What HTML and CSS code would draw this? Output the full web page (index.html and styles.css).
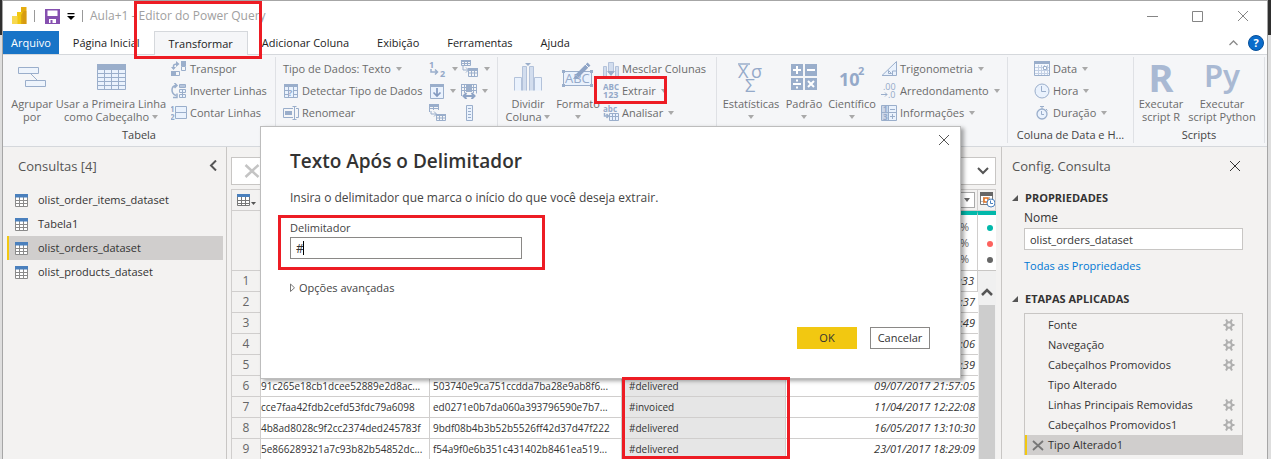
FILE: index.html
```html
<!DOCTYPE html>
<html lang="pt-BR">
<head>
<meta charset="utf-8">
<title>Aula+1 - Editor do Power Query</title>
<link rel="stylesheet" href="styles.css">
</head>
<body>
<svg class="defs" aria-hidden="true">
  <symbol id="table" viewBox="0 0 14 13"><path fill="#fff" d="M.5 2.500h12v9.500h-12z"/><path fill="none" stroke="#8a8a8a" d="M.5 3v9.500h12V3M4.500 3v9M8.500 3v9M1 6.500h12M1 9.500h12"/><path fill="#4a80bd" d="M0 0h13v3.500H0z"/></symbol>
  <symbol id="gear" viewBox="0 0 12 12"><path stroke="#b0b0b0" stroke-width="2" d="M.5 6h11M3 .5l6 11M9 .5l-6 11"/><circle cx="6" cy="6" r="2.800" fill="#f3f2f1" stroke="#b0b0b0" stroke-width="2"/></symbol>
  <symbol id="cross" viewBox="0 0 12 12"><path fill="none" stroke="currentColor" d="M1 1l10 10M11 1L1 11"/></symbol>
</svg>
<div class="window">
  <header class="titlebar">
    <svg class="logo" width="16" height="18" viewBox="0 0 16 18"><path fill="#e6ad10" d="M9 0h5.500v17H9z"/><path fill="#f2c811" d="M5 5h5.500v12H5z"/><path fill="#f7d84f" d="M0 9h5.500v8H0z"/><path fill="#c88a10" d="M12 4h2.500v13H9v-9z" opacity=".5"/></svg>
    <i class="bar"></i>
    <button class="plain" aria-label="Salvar"><svg width="15" height="15" viewBox="0 0 15 15"><path fill="#8650b0" d="M0 0h15v15H0z"/><path fill="#fff" d="M2.500 1.500h10V7h-10zM4 10h7v4H4z"/><path fill="#8650b0" d="M5.500 11h2v3h-2z"/></svg></button>
    <button class="plain more" aria-label="Personalizar"><svg width="8" height="8" viewBox="0 0 8 8"><path d="M.5 0h7v1.200h-7zM0 3h8L4 7z"/></svg></button>
    <i class="bar"></i>
    <h1>Aula+1 - Editor do Power Query</h1>
    <div class="controls">
      <button class="plain" aria-label="Minimizar"><svg width="11" height="11"><path stroke="#858585" d="M0 5.500h11"/></svg></button>
      <button class="plain" aria-label="Maximizar"><svg width="11" height="11"><path fill="none" stroke="#858585" d="M.5.500h10v10H.5z"/></svg></button>
      <button class="plain" aria-label="Fechar"><svg width="12" height="12"><use href="#cross"/></svg></button>
    </div>
  </header>

  <nav class="tabs">
    <button class="file">Arquivo</button>
    <button>Página Inicial</button>
    <button class="active">Transformar</button>
    <button>Adicionar Coluna</button>
    <button>Exibição</button>
    <button>Ferramentas</button>
    <button>Ajuda</button>
    <div class="help">
      <svg width="9" height="6"><path fill="none" stroke="#8a8a8a" stroke-width="1.300" d="M.5 5l4-4 4 4"/></svg>
      <button class="plain question" aria-label="Ajuda do programa">?</button>
    </div>
  </nav>

  <section class="ribbon">
    <div class="group g-table">
      <div class="tools">
        <button class="big"><svg width="32" height="32" viewBox="0 0 32 32"><path fill="#eef4fc" stroke="#9aaecb" d="M2.500 6.500h20v6h-20zM9.500 19.500h20v6h-20z"/><path stroke="#9aaecb" d="M15 13l6 6"/></svg><span>Agrupar<br>por</span></button>
        <button class="big"><svg width="32" height="32" viewBox="0 0 32 32"><path fill="#eaf2fd" stroke="#9aaecb" d="M2.500 3.500h28v25h-28z"/><path stroke="#9aaecb" d="M2 12.500h28M2 16.500h28M2 20.500h28M2 24.500h28M9.500 8v20M16.500 8v20M23.500 8v20"/><path fill="#9aaecb" d="M2 3h29v6H2z"/></svg><span>Usar a Primeira Linha<br>como Cabeçalho <i class="caret"></i></span></button>
        <div class="stack">
          <button><svg width="16" height="16" viewBox="0 0 16 16"><path fill="none" stroke="#9aaecb" d="M10.500 5.500h4v4h-4zM10.500.500h4v4h-4zM.5 10.500h8v4h-8z"/><path fill="none" stroke="#9aaecb" stroke-width="1.500" d="M2.500 8V5q0-2 4-2"/><path fill="#9aaecb" d="M10 0h5v5h-5zM0 10h5v5H0zM5 0l3.500 3L5 6zM0 6h5L2.500 9z"/></svg>Transpor</button>
          <button><svg width="16" height="16" viewBox="0 0 16 16"><path fill="none" stroke="#9aaecb" stroke-width="1.500" d="M5 2.500Q1 3 1 7t4 5.500M3.500 0L6 2.500 3.500 5M2 14.500h4v-4"/><path fill="#eaf2fd" stroke="#9aaecb" d="M8.500 1.500h6v3h-6zM8.500 6.500h6v3h-6zM8.500 11.500h6v3h-6zM11.500 6v9"/><path fill="#b6c5dc" d="M9 2h5v2H9z"/></svg>Inverter Linhas</button>
          <button><svg width="16" height="16" viewBox="0 0 16 16"><text x="-1" y="7" class="tiny">1</text><text x="-1" y="15" class="tiny">2</text><path fill="#eaf2fd" stroke="#9aaecb" d="M4.500 1.500h11v6h-11zM4.500 7.500h11v6h-11z"/></svg>Contar Linhas</button>
        </div>
      </div>
      <h2>Tabela</h2>
    </div>

    <div class="group g-any">
      <div class="tools">
        <div class="stack">
          <button>Tipo de Dados: Texto <i class="caret"></i></button>
          <button><svg width="16" height="16" viewBox="0 0 16 16"><path fill="#eaf2fd" stroke="#9aaecb" d="M1.500 1.500h13v13h-13zM5.500 4v10M10.500 4v10M1 7.500h13M1 11.500h13"/><path fill="#9aaecb" d="M1 1h14v3H1z"/><path fill="#eaf2fd" d="M6 5h4v9H6z"/><text x="5" y="13" class="small">?</text></svg>Detectar Tipo de Dados</button>
          <button><svg width="16" height="16" viewBox="0 0 16 16"><path fill="none" stroke="#9aaecb" d="M10 3.500H.5v9H10M13 3.500h2.500v9H13M11.500 1.500v13M9.500 1.500h4M9.500 14.500h4"/><path fill="#9aaecb" d="M2 6h7v4H2z"/></svg>Renomear</button>
        </div>
        <div class="stack">
          <button aria-label="Substituir Valores"><svg width="18" height="18" viewBox="0 0 18 18"><text x="0" y="8" class="small">1</text><text x="11" y="17" class="small">2</text><path fill="none" stroke="#9aaecb" stroke-width="1.500" d="M2 9v3h6M6 9.500L8.500 12 6 14.500"/></svg><i class="caret"></i></button>
          <button aria-label="Preenchimento"><svg width="16" height="16" viewBox="0 0 16 16"><path fill="#eaf2fd" stroke="#9aaecb" d="M1.500 1.500h13v14h-13z"/><path fill="#9aaecb" d="M1 1h14v3H1z"/><path fill="none" stroke="#8299bf" stroke-width="1.700" d="M8 5v8M4.500 9.500L8 13l3.500-3.500"/></svg><i class="caret"></i></button>
          <button aria-label="Coluna Dinâmica"><svg width="18" height="18" viewBox="0 0 18 18"><path fill="none" stroke="#9aaecb" d="M1 4.500h8M4.500 1v5M.5 8V1.500h9V6M7.500 11.500h9v5h-9zM7 14h10M10.500 11v6M13.500 11v6M2 7v3h5M5 7.500L7.500 10 5 12.500"/><path fill="#9aaecb" d="M0 0h10v3H0zM7 10h10v2H7z"/></svg></button>
        </div>
        <div class="stack">
          <button aria-label="Transformar em Linhas"><svg width="18" height="18" viewBox="0 0 18 18"><path fill="none" stroke="#9aaecb" d="M.5.500h9v5h-9zM0 3.500h10M3.500 0v6M6.500 0v6M7.500 9.500h9v7h-9zM7 13h10M10.500 9v8M13.500 9v8M2 6v4h5M5 7.500L7.500 10 5 12.500"/><path fill="#9aaecb" d="M0 0h10v2H0zM7 8h10v3H7z"/></svg><i class="caret"></i></button>
          <button aria-label="Mover"><svg width="16" height="16" viewBox="0 0 16 16"><path fill="none" stroke="#9aaecb" d="M.5 1.500h15v9M.5 1v12M3.500 1v9M0 4.500h5M0 7.500h5M12.500 1v9M11 4.500h5M11 7.500h5"/><path fill="#9aaecb" d="M5 1h6v8H5z"/><path fill="none" stroke="#8da3c5" stroke-width="2" d="M3 13h10M5.500 10L2.500 13l3 3M10.500 10l3 3-3 3"/></svg><i class="caret"></i></button>
          <button aria-label="Converter em Lista"><svg width="16" height="16" viewBox="0 0 16 16"><path fill="#eaf2fd" stroke="#9aaecb" d="M5.500.500h6v15h-6zM7 3.500h3M7 6.500h3M7 9.500h3M7 12.500h3"/></svg></button>
        </div>
      </div>
    </div>

    <div class="group g-text">
      <div class="tools">
        <button class="big"><svg width="32" height="32" viewBox="0 0 32 32"><path fill="#eaf2fd" stroke="#b3c2da" d="M2.500 29.500v-13h7v13M22.500 29.500v-13h7v13"/><path fill="#d2ddee" stroke="#b3c2da" d="M10.500 29.500v-24h4v24M17.500 29.500v-24h4v24"/><path fill="#9aaecb" d="M13 2h6l-3 3z"/></svg><span>Dividir<br>Coluna <i class="caret"></i></span></button>
        <button class="big"><svg width="34" height="32" viewBox="0 0 34 32"><path fill="#eaf2fd" stroke="#9aaecb" d="M2.500 10.500h28v14h-28z"/><path fill="#9aaecb" d="M1 9h3v3H1zM29 9h3v3h-3zM1 23h3v3H1zM29 23h3v3h-3z"/><text x="4" y="22" class="abc">ABC</text><path stroke="#8ea4c6" stroke-width="4" d="M16 15L28 3"/><path stroke="#f5f6f9" stroke-width="1" d="M24 3l4 4"/><path fill="#8ea4c6" d="M12 18l3-4 3 3z"/></svg><span>Formato<br><i class="caret"></i></span></button>
        <div class="stack">
          <button><svg width="16" height="16" viewBox="0 0 16 16"><path fill="#d2ddee" stroke="#b3c2da" d="M.5 15V5.500h3V15M12.500 15V5.500h3V15M5.500 12V1.500h5V12"/><path fill="#9aaecb" d="M4 10h8l-4 5z"/></svg>Mesclar Colunas</button>
          <button><svg width="16" height="16" viewBox="0 0 16 16"><text x="0" y="7" class="tiny">ABC</text><text x="0" y="15" class="small">123</text></svg>Extrair <i class="caret"></i></button>
          <button><svg width="16" height="16" viewBox="0 0 16 16"><text x="0" y="7" class="tiny">abc</text><path fill="#eaf2fd" stroke="#9aaecb" d="M6.500 8.500h9v7h-9zM6 11.500h10M9.500 8v7M12.500 8v7"/><path fill="none" stroke="#9aaecb" stroke-width="1.500" d="M1.500 8v3h4M3.500 9l2 2-2 2"/></svg>Analisar <i class="caret"></i></button>
        </div>
      </div>
    </div>

    <div class="group g-number">
      <div class="tools">
        <button class="big"><svg width="32" height="32" viewBox="0 0 32 32"><path stroke="#9aaecb" stroke-width="1.500" d="M3 3h12"/><text x="3" y="17" class="math">X</text><text x="16" y="17" class="math">σ</text><text x="10" y="31" class="math">Σ</text></svg><span>Estatísticas<br><i class="caret"></i></span></button>
        <button class="big"><svg width="32" height="32" viewBox="0 0 32 32"><path fill="#9aaecb" d="M3 3h12v12H3zM17 3h12v12H17zM3 17h12v12H3zM17 17h12v12H17z"/><path stroke="#fff" stroke-width="2" d="M5 9h8M9 5v8M19 9h8M5 23h8M20 20l6 6M26 20l-6 6"/><path fill="#fff" d="M8 18.500h2v2H8zM8 25.500h2v2H8z"/></svg><span>Padrão<br><i class="caret"></i></span></button>
        <button class="big"><svg width="32" height="32" viewBox="0 0 32 32"><text x="3" y="25" class="ten">10</text><text x="22" y="14" class="exp">2</text></svg><span>Científico<br><i class="caret"></i></span></button>
        <div class="stack">
          <button><svg width="16" height="16" viewBox="0 0 16 16"><path fill="#eaf2fd" stroke="#9aaecb" d="M15.500.500v14H1zM11.500 14v-4h4"/><path fill="#f5f6f9" stroke="#9aaecb" d="M7.500 12.500v-3l3 3z"/></svg>Trigonometria <i class="caret"></i></button>
          <button><svg width="16" height="16" viewBox="0 0 16 16"><text x="2" y="7" class="small plainnum">.00</text><text x="7" y="15" class="small plainnum">.0</text><path fill="none" stroke="#9aaecb" d="M0 11.500h6M4 9.500l2 2-2 2"/></svg>Arredondamento <i class="caret"></i></button>
          <button><svg width="16" height="16" viewBox="0 0 16 16"><path fill="#eaf2fd" stroke="#9aaecb" d="M.5.500h15v15H.5z"/><path fill="#cbd7e9" d="M1 1h6v14H1z"/><path stroke="#9aaecb" d="M7.500 0v16M0 7.500h16M9 4.500h5M9 11.500h5M11.500 9v5"/><text x="2" y="7" class="tiny">1</text><text x="2" y="15" class="tiny">3</text></svg>Informações <i class="caret"></i></button>
        </div>
      </div>
    </div>

    <div class="group g-date">
      <div class="tools">
        <div class="stack">
          <button><svg width="16" height="16" viewBox="0 0 16 16"><path fill="#f4f8fe" stroke="#9aaecb" d="M.5.500h15v14H.5z"/><path stroke="#c3d0e4" d="M4.500 4v10M7.500 4v10M10.500 4v10M13.500 4v10M1 6.500h14M1 9.500h14M1 12.500h14"/><path fill="#9aaecb" d="M0 0h16v3H0z"/><path fill="#fff" stroke="#9aaecb" d="M9.500 5.500h3v3h-3z"/></svg>Data <i class="caret"></i></button>
          <button><svg width="16" height="16" viewBox="0 0 16 16"><circle cx="8" cy="8" r="7" fill="#eaf2fd" stroke="#9aaecb"/><path fill="none" stroke="#9aaecb" d="M7.500 3v5.500H12"/></svg>Hora <i class="caret"></i></button>
          <button><svg width="16" height="16" viewBox="0 0 16 16"><circle cx="8" cy="9" r="5" fill="#eaf2fd" stroke="#9aaecb" stroke-width="1.300"/><path fill="none" stroke="#9aaecb" d="M7.500 6v3.500H10M6 1.500h4M8 2v2M12 4l1.500 1.500"/></svg>Duração <i class="caret"></i></button>
        </div>
      </div>
      <h2>Coluna de Data e H...</h2>
    </div>

    <div class="group g-script">
      <div class="tools">
        <button class="big"><b class="lang">R</b><span>Executar<br>script R</span></button>
        <button class="big"><b class="lang python">Py</b><span>Executar<br>script Python</span></button>
      </div>
      <h2>Scripts</h2>
    </div>
  </section>

  <main class="workspace">
    <aside class="queries">
      <div class="pane-head"><h2>Consultas [4]</h2><button class="plain" aria-label="Recolher"><svg width="8" height="11"><path fill="none" stroke="#555" stroke-width="2" d="M7 .500l-5 5 5 5"/></svg></button></div>
      <ul>
        <li><svg width="14" height="13"><use href="#table"/></svg>olist_order_items_dataset</li>
        <li><svg width="14" height="13"><use href="#table"/></svg>Tabela1</li>
        <li class="selected"><svg width="14" height="13"><use href="#table"/></svg>olist_orders_dataset</li>
        <li><svg width="14" height="13"><use href="#table"/></svg>olist_products_dataset</li>
      </ul>
    </aside>

    <section class="grid">
      <div class="formula">
        <svg width="16" height="14"><path stroke="#c4c4c4" stroke-width="2.500" d="M1.500 1l13 12M14.500 1l-13 12"/></svg>
        <svg width="12" height="8"><path fill="none" stroke="#555" stroke-width="2" d="M1 1l5 5 5-5"/></svg>
      </div>
      <table>
        <colgroup><col class="c-index"><col class="c-key"><col class="c-wide"><col class="c-status"><col class="c-wide"><col class="c-scroll"></colgroup>
        <thead>
          <tr class="names">
            <th><svg width="21" height="13" viewBox="0 0 21 13"><path fill="#fff" stroke="#777" d="M.5.500h12v11H.5zM4.500 3v9M8.500 3v9M1 6.500h12M1 9.500h12"/><path fill="#4a80bd" d="M0 0h13v3H0z"/><path fill="#555" d="M14 8h5l-2.500 3z"/></svg></th>
            <th></th><th></th><th></th>
            <th class="filter"><button aria-label="Filtrar"><i class="caret dark"></i></button></th>
            <th><svg width="16" height="16" viewBox="0 0 16 16"><path fill="#fff" stroke="#777" d="M.5 1.500h12v11H.5z"/><path stroke="#bbb" d="M1 9.500h11M3.500 5v7M9.500 5v7"/><path fill="#666" d="M0 0h13v4H0z"/><path fill="#fff" stroke="#e07020" stroke-width="1.500" d="M4 6h4v4H4z"/><circle cx="11" cy="11" r="4" fill="#fff" stroke="#4a80bd"/><path fill="none" stroke="#4a80bd" d="M10.500 8.500v3H13"/></svg></th>
          </tr>
          <tr class="quality"><th></th><td></td><td></td><td></td><td><p>%</p><p>%</p><p>%</p></td><td><p><i class="dot valid"></i></p><p><i class="dot error"></i></p><p><i class="dot empty"></i></p></td></tr>
        </thead>
        <tbody>
          <tr><th>1</th><td></td><td></td><td class="picked"></td><td class="date">:33</td><td class="scroll" rowspan="9"><svg width="12" height="9"><path fill="none" stroke="#555" stroke-width="2.500" d="M1 7l5-5 5 5"/></svg><div class="thumb"></div></td></tr>
          <tr><th>2</th><td></td><td></td><td class="picked"></td><td class="date">:37</td></tr>
          <tr><th>3</th><td></td><td></td><td class="picked"></td><td class="date">:49</td></tr>
          <tr><th>4</th><td></td><td></td><td class="picked"></td><td class="date">:06</td></tr>
          <tr><th>5</th><td></td><td></td><td class="picked"></td><td class="date">:39</td></tr>
          <tr><th>6</th><td class="key">91c265e18cb1dcee52889e2d8ac...</td><td>503740e9ca751ccdda7ba28e9ab8f6...</td><td class="picked">#delivered</td><td class="date">09/07/2017 21:57:05</td></tr>
          <tr><th>7</th><td class="key">cce7faa42fdb2cefd53fdc79a6098</td><td>ed0271e0b7da060a393796590e7b7...</td><td class="picked">#invoiced</td><td class="date">11/04/2017 12:22:08</td></tr>
          <tr><th>8</th><td class="key">4b8ad8028c9f2cc2374ded245783f</td><td>9bdf08b4b3b52b5526ff42d37d47f222</td><td class="picked">#delivered</td><td class="date">16/05/2017 13:10:30</td></tr>
          <tr><th>9</th><td class="key">5e866289321a7c93b82b54852dc...</td><td>f54a9f0e6b351c431402b8461ea519...</td><td class="picked">#delivered</td><td class="date">23/01/2017 18:29:09</td></tr>
        </tbody>
      </table>
    </section>

    <aside class="settings">
      <div class="pane-head"><h2>Config. Consulta</h2><button class="plain" aria-label="Fechar painel"><svg width="12" height="12"><use href="#cross"/></svg></button></div>
      <h3>PROPRIEDADES</h3>
      <div class="props">
        <label for="name">Nome</label>
        <input id="name" value="olist_orders_dataset">
        <a href="#props">Todas as Propriedades</a>
      </div>
      <h3>ETAPAS APLICADAS</h3>
      <ol>
        <li><span>Fonte</span><svg width="12" height="12"><use href="#gear"/></svg></li>
        <li><span>Navegação</span><svg width="12" height="12"><use href="#gear"/></svg></li>
        <li><span>Cabeçalhos Promovidos</span><svg width="12" height="12"><use href="#gear"/></svg></li>
        <li><span>Tipo Alterado</span></li>
        <li><span>Linhas Principais Removidas</span><svg width="12" height="12"><use href="#gear"/></svg></li>
        <li><span>Cabeçalhos Promovidos1</span><svg width="12" height="12"><use href="#gear"/></svg></li>
        <li class="selected"><svg width="12" height="11"><path stroke="#777" stroke-width="1.800" d="M1 1l10 9M11 1L1 10"/></svg><span>Tipo Alterado1</span></li>
      </ol>
    </aside>
  </main>
</div>

<div class="dialog" role="dialog" aria-labelledby="dialog-title">
  <button class="plain close" aria-label="Fechar"><svg width="12" height="12"><use href="#cross"/></svg></button>
  <h2 id="dialog-title">Texto Após o Delimitador</h2>
  <p>Insira o delimitador que marca o início do que você deseja extrair.</p>
  <label for="delimiter">Delimitador</label>
  <div class="field"><input id="delimiter" value="#"><i class="cursor"></i></div>
  <button class="plain advanced"><svg width="6" height="10"><path fill="none" stroke="#777" d="M.5 1v7.500l4-3.700z"/></svg>Opções avançadas</button>
  <div class="actions"><button class="ok">OK</button><button>Cancelar</button></div>
</div>

<div class="mark mark-title"></div>
<div class="mark mark-extract"></div>
<div class="mark mark-field"></div>
<div class="mark mark-cells"></div>
</body>
</html>
```
FILE: styles.css
```css
* { box-sizing: border-box; }
body, h1, h2, h3, p, ul, ol { margin: 0; padding: 0; font-weight: normal; }
ul, ol { list-style: none; }
body {
  height: 100vh;
  overflow: hidden;
  position: relative;
  font: 12px/16px "Open Sans", "Noto Sans", sans-serif;
  color: #333;
  background: linear-gradient(#2f2f2f 35px, #dedede 35px);
}
button, input { font: inherit; color: inherit; margin: 0; border-radius: 0; }
button { background: none; border: 0; padding: 0; }
svg { display: block; flex: none; }
.defs { position: absolute; width: 0; height: 0; }
.plain { display: flex; align-items: center; }

.window {
  height: 100%;
  margin: 0 3px 0 2px;
  border: solid #a6a6a6;
  border-width: 1px 1px 0;
  background: #fff;
  display: flex;
  flex-direction: column;
  overflow: hidden;
}

.titlebar { height: 30px; flex: none; display: flex; align-items: center; padding-left: 9px; }
.titlebar h1 { font-size: 12px; color: #a0a0a0; }
.bar { width: 1px; height: 12px; background: #999; margin: 0 7px; }
.titlebar .bar:first-of-type { margin: 0 10px 0 6px; }
.more { margin: 2px 0 0 7px; }
.controls { margin-left: auto; display: flex; gap: 34px; padding-right: 18px; color: #858585; }

.tabs { height: 24px; flex: none; display: flex; border-bottom: 1px solid #d5d8dc; font-size: 11px; color: #222; }
.tabs > button { padding: 0 14px; font-weight: 500; }
.tabs .file { background: #1874c7; color: #fff; padding: 0 8px; }
.tabs .active { background: #f5f6f8; border: 1px solid #d5d8dc; border-bottom: 0; margin-bottom: -1px; }
.help { margin-left: auto; display: flex; align-items: center; gap: 10px; padding-right: 3px; }
.question { width: 16px; height: 16px; border-radius: 50%; background: #0a6ccb; border: 1px solid #08509a; color: #fff; font-weight: bold; justify-content: center; }

.ribbon {
  flex: none;
  display: grid;
  grid-template-columns: 273fr 222fr 219fr 291fr 126fr 131fr;
  padding: 2px 2px 3px 0;
  background: #f5f6f8;
  border-bottom: 1px solid #d5d8dc;
  color: #6b6b6b;
  font-size: 11px;
}
.group { border-right: 1px solid #dfe1e5; min-width: 0; }
.group h2 { font-size: 11px; line-height: 14px; text-align: center; color: #444; padding: 3px 0 1px; }
.tools { display: grid; height: 68px; }
.g-table .tools { grid-template-columns: 50px 108px 1fr; padding-left: 4px; }
.g-any .tools { grid-template-columns: 146px 32px 1fr; padding-left: 7px; }
.g-text .tools { grid-template-columns: 54px 46px 1fr; padding-left: 3px; }
.g-number .tools { grid-template-columns: 60px 46px 50px 1fr; padding-left: 4px; }
.g-date .tools { padding-left: 26px; }
.g-script .tools { grid-template-columns: 54px 68px; }
.big { display: flex; flex-direction: column; align-items: center; padding-top: 4px; line-height: 13px; text-align: center; white-space: nowrap; }
.big span { padding-top: 4px; }
.stack { padding: 1px 0 0 6px; }
.g-text .stack { padding-left: 2px; }
.g-number .stack { padding-left: 4px; }
.g-any .stack, .g-date .stack { padding-left: 0; }
.stack button { display: flex; align-items: center; gap: 3px; height: 22px; white-space: nowrap; }
.caret { display: inline-block; border: solid transparent; border-width: 4px 3px 0; border-top-color: #a9a9a9; margin-left: 2px; vertical-align: 2px; }
.big .caret { margin-left: 0; }
.caret.dark { border-top-color: #666; margin: 0; }
.lang { height: 32px; font: bold 38px/32px "Noto Sans", "Open Sans", sans-serif; color: #a9b9d3; }
.python { font-size: 31px; font-weight: 600; line-height: 28px; }
svg text { font-family: "Open Sans", "Noto Sans", sans-serif; font-weight: bold; fill: #94a9c9; }
svg .tiny { font-size: 8px; }
svg .small { font-size: 9px; }
svg .plainnum { font-weight: normal; }
svg .abc { font-size: 13px; font-weight: normal; }
svg .math { font-size: 18px; font-weight: normal; }
svg .ten { font-size: 18px; }
svg .exp { font-size: 11px; }

.workspace { flex: 1; min-height: 0; display: grid; grid-template-columns: 224px 1fr 265px; background: #f3f2f1; }
.pane-head { display: flex; justify-content: space-between; align-items: center; height: 37px; }
.pane-head h2 { font-size: 13px; color: #555; }

.queries { border-right: 1px solid #c8c6c4; padding: 0 3px 0 4px; }
.queries .pane-head { padding: 0 6px 0 11px; margin-bottom: 4px; }
.queries li { height: 24px; display: flex; align-items: center; gap: 9px; padding-left: 6px; border-left: 2px solid transparent; font-size: 11px; }
.queries .selected { background: #d0cecd; border-color: #f2c811; }

.grid { padding: 10px 5px 0 4px; border-right: 1px solid #c8c6c4; overflow: hidden; }
.formula { height: 28px; display: flex; align-items: center; justify-content: space-between; padding: 0 6px 0 12px; background: #fff; border: 1px solid #c8c6c4; margin-bottom: 4px; }
table { width: 100%; border-collapse: separate; border-spacing: 0; table-layout: fixed; background: #fff; font-size: 10px; }
.c-index { width: 30px; }
.c-wide { width: 192px; }
.c-status { width: 164px; }
.c-scroll { width: 18px; }
th, td { height: 21px; line-height: 16px; padding: 0 3px; border: solid #d0cecd; border-width: 0 1px 1px 0; white-space: nowrap; overflow: hidden; text-align: left; }
th { background: #f3f2f1; color: #666; font-weight: normal; }
th:first-child { border-left-width: 1px; text-align: center; font-size: 12px; padding: 0; }
.names th { height: 22px; border-top-width: 1px; }
.names th:first-child svg { margin-left: 5px; }
.filter button { display: flex; align-items: center; justify-content: center; width: 16px; height: 16px; margin-left: auto; background: #fff; border: 1px solid #aaa; }
.names .filter { padding-right: 2px; }
.names th:last-child { padding: 0 0 0 2px; }
.quality td { height: 60px; border-top: 4px solid #01b8aa; border-bottom-color: #c8c6c4; text-align: right; color: #666; padding-right: 8px; font-size: 11px; }
.quality p { height: 16px; }
.quality td:last-child { padding-right: 3px; }
.dot { display: inline-block; width: 6px; height: 6px; border-radius: 50%; vertical-align: middle; }
.valid { background: #01b8aa; }
.error { background: #fd625e; }
.empty { background: #666; }
td:last-child { border-right: 0; }
.key { padding: 0; }
.picked { background: #e6e6e6; padding-left: 7px; }
td.date { text-align: right; font-style: italic; font-size: 11px; border-right-width: 1px; }
.scroll { background: #f0f0f0; vertical-align: top; padding: 17px 1px 0; }
.scroll svg { margin-left: 2px; }
.thumb { height: 154px; background: #cdcdcd; margin-top: 8px; }

.settings { padding: 0 24px 0 10px; }
.settings .pane-head { padding-right: 2px; }
.settings h3 { display: flex; align-items: center; gap: 7px; font-size: 11px; font-weight: bold; line-height: 20px; margin-top: 4px; }
.settings h3::before { content: ""; border: solid transparent; border-width: 0 0 6px 6px; border-bottom-color: #555; }
.props { padding-left: 12px; }
.props label, .props a { display: block; }
.props label { line-height: 20px; }
.props input { display: block; width: 100%; height: 22px; border: 1px solid #c8c6c4; background: #fff; padding: 0 5px; font-size: 11px; }
.props a { color: #0078d4; text-decoration: none; font-size: 11px; line-height: 20px; margin: 6px 0 13px; }
.settings ol { border: 1px solid #c8c6c4; border-bottom: 0; margin: 4px 0 0 12px; padding-top: 1px; }
.settings li { display: flex; align-items: center; height: 20px; padding: 0 7px 0 21px; border-left: 2px solid transparent; white-space: nowrap; font-size: 11px; }
.settings li span + svg { margin-left: auto; }
.settings .selected { background: #d0cecd; border-color: #f2c811; padding-left: 5px; gap: 4px; }

.dialog {
  position: absolute;
  left: 260px;
  right: 310px;
  top: 126px;
  padding: 22px 30px 29px 29px;
  background: #fff;
  border: 1px solid #bdbdbd;
  box-shadow: 3px 2px 4px rgba(0, 0, 0, .35);
}
.close { position: absolute; right: 10px; top: 7px; color: #555; }
.dialog h2 { font-size: 19px; line-height: 24px; font-weight: 600; }
.dialog p { margin: 17px 0 14px; color: #444; }
.dialog label { display: block; color: #444; font-size: 11px; }
.field { display: flex; align-items: center; position: relative; margin-top: 1px; }
.field input { width: 232px; height: 22px; border: 1px solid #8a8886; padding: 0 5px; outline: 0; }
.cursor { position: absolute; left: 13px; width: 1px; height: 14px; background: #000; }
.advanced { gap: 3px; margin: 21px 0 31px; color: #444; font-size: 11px; height: 16px; }
.actions { display: flex; justify-content: flex-end; gap: 13px; font-size: 11px; }
.actions button { width: 60px; height: 22px; border: 1px solid #8a8886; }
.actions .ok { background: #f2c811; border-color: #f2c811; }

.mark { position: absolute; border: 3px solid #ed1c24; pointer-events: none; }
.mark-title { left: 134px; top: 1px; width: 128px; height: 58px; }
.mark-extract { left: 594px; top: 76px; width: 73px; height: 28px; }
.mark-field { left: 278px; top: 215px; width: 267px; height: 55px; }
.mark-cells { left: 622px; top: 377px; width: 168px; bottom: 0; }
```
